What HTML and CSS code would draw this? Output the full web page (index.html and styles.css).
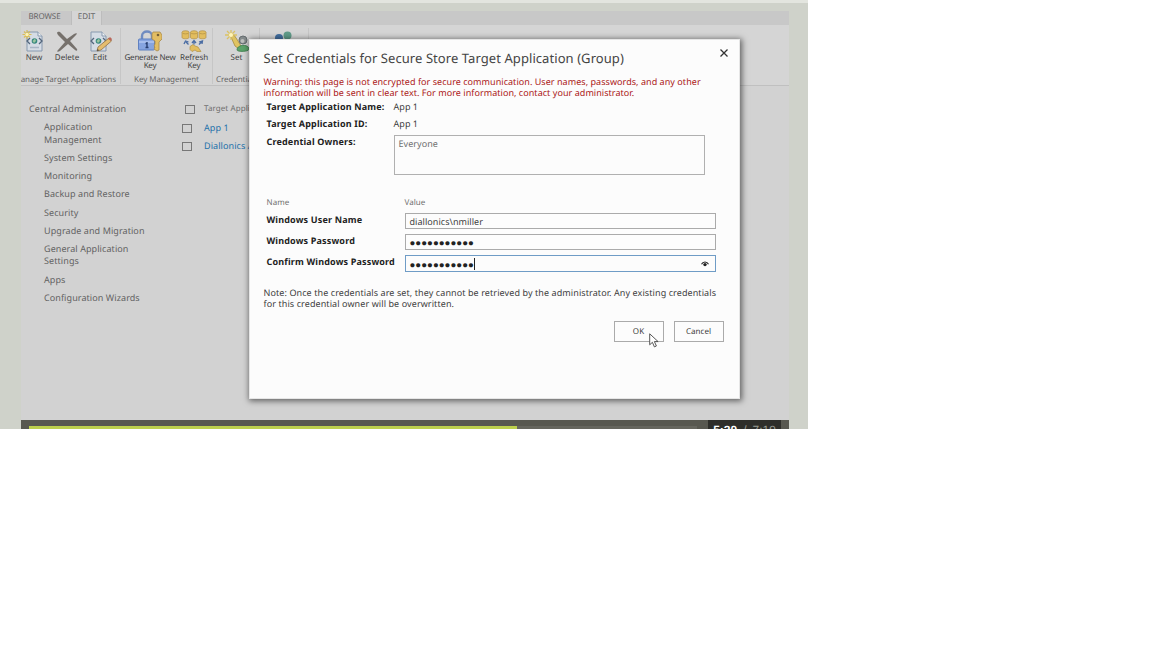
FILE: index.html
```html
<!DOCTYPE html>
<html lang="en">
<head>
<meta charset="utf-8">
<title>Secure Store Target Application</title>
<link rel="stylesheet" href="styles.css">
</head>
<body>
<main class="stage">
  <section class="screen">
    <nav class="tabs"><span class="tab tab-browse">BROWSE</span><span class="tab tab-edit">EDIT</span></nav>
    <div class="ribbon">
      <div class="group group-manage">
        <div class="tools">
          <div class="tool">
            <svg class="icon" viewBox="0 0 24 22"><path d="M5 2h11l4 4v15H5z" fill="#d5dce5" stroke="#8799af"/><path d="M16 2v4h4" fill="#f1f3f5" stroke="#8799af"/><path d="M8 8l-3 3 3 3M17 8l3 3-3 3" fill="none" stroke="#53667d" stroke-width="1.3"/><circle cx="12.5" cy="11" r="2.8" fill="#35877e"/><path d="M10.500 11l2.500-2.500 1 2.500-2 2z" fill="#9bc5a0"/><path d="M8 17.500h9" stroke="#a8b5c5" stroke-width="1.5"/><path d="M5 0v9M.5 4.500h9M2 1.500l6 6M8 1.500l-6 6" stroke="#d8bd5b" stroke-width="1.200"/><circle cx="5" cy="4.500" r="1.700" fill="#fff3b0"/></svg>
            <span>New</span>
          </div>
          <div class="tool">
            <svg class="icon" viewBox="0 0 24 22"><path d="M2 3c1-2 3-1 4 0l6 6 7-5c2-1 4-1 2 1l-6 6 7 8c1 2-1 2-2 1l-7-6-8 7c-2 1-4 1-2-1l7-8-7-7z" fill="#76716c"/></svg>
            <span>Delete</span>
          </div>
          <div class="tool">
            <svg class="icon" viewBox="0 0 24 22"><path d="M3 2h11l4 4v15H3z" fill="#d5dce5" stroke="#8799af"/><path d="M14 2v4h4" fill="#f1f3f5" stroke="#8799af"/><path d="M6 8l-3 3 3 3M15 8l3 3-3 3" fill="none" stroke="#53667d" stroke-width="1.300"/><circle cx="10.500" cy="11" r="2.800" fill="#35877e"/><path d="M8.500 11l2.500-2.500 1 2.500-2 2z" fill="#9bc5a0"/><path d="M9 21l1-4L21 8l2.500 3L13 20z" fill="#e5bd6e" stroke="#8f7146" stroke-width=".8"/><path d="M20 9l2-2 2 2-1 2z" fill="#b9675b"/><path d="M9 21l.6-2 1.500 1.300z" fill="#444"/></svg>
            <span>Edit</span>
          </div>
        </div>
        <div class="group-name">Manage Target Applications</div>
      </div>
      <div class="group group-keys">
        <div class="tools">
          <div class="tool tool-generate">
            <svg class="icon" viewBox="0 0 24 22"><path d="M4 10V6c0-6 10-6 10 0v4" fill="none" stroke="#6f8bc0" stroke-width="2.400"/><rect x=".5" y="9" width="16" height="11" rx="1" fill="#86a4e0" stroke="#5f80c0"/><path d="M1 12h15" stroke="#a6bdec" stroke-width="2"/><path d="M9 12v6M7.500 13.500h2M7.500 17.500h3" stroke="#273e70" stroke-width="1.400"/><path d="M15 2h7l2 3v4l-3 3v8l-2 1-3-2 1-2-1-1 1-2v-3l-3-2V4z" fill="#e2bd63" stroke="#a88a4d" stroke-width=".8"/><circle cx="20" cy="5" r="1.300" fill="#755e35"/></svg>
            <span>Generate New<br>Key</span>
          </div>
          <div class="tool tool-refresh">
            <svg class="icon icon-wide" viewBox="0 0 26 22"><g fill="#e2bd5e" stroke="#b29145" stroke-width=".7"><path d="M1 2.500v5c0 1.700 7 1.700 7 0v-5M9.500 2.500v5c0 1.700 7 1.700 7 0v-5M18 2.500v5c0 1.700 7 1.700 7 0v-5"/><ellipse cx="4.500" cy="2.300" rx="3.500" ry="1.600"/><ellipse cx="13" cy="2.300" rx="3.500" ry="1.600"/><ellipse cx="21.500" cy="2.300" rx="3.500" ry="1.600"/><path d="M9 16.500l3-2 2 1.500 3 1 3 4.500h-4l-2-1.500-3 1.500-2-2z"/></g><path d="M7.500 14.500L5 12m-2 2l1.500-3 3 1M13 14.500v-3m-2 1.500l2-2.500 2 2.500M18 14.500l3-3m-3 .5l3.500-1-.5 3" fill="none" stroke="#4a6ca3" stroke-width="1.300"/></svg>
            <span>Refresh<br>Key</span>
          </div>
        </div>
        <div class="group-name">Key Management</div>
      </div>
      <div class="group group-credentials">
        <div class="tools">
          <div class="tool">
            <svg class="icon" viewBox="0 0 24 22"><path d="M6 7l3-2 4 6 3 5-2 3-4-3z" fill="#e0c461" stroke="#a68b3d" stroke-width=".8"/><path d="M6 0v10M0 5h12M2 1l8 8M10 1L2 9" stroke="#dbc263" stroke-width="1.300"/><circle cx="6" cy="5" r="2" fill="#fff5b9"/><path d="M12 20c0-6 12-6 12-1 0 3-12 3-12 1z" fill="#5ca46a" stroke="#3b7c4b" stroke-width=".8"/><circle cx="18" cy="10" r="4" fill="#858b8c" stroke="#666d70"/><circle cx="17.500" cy="11" r="2" fill="#bec1bf"/></svg>
            <span>Set</span>
          </div>
        </div>
        <div class="group-name">Credentials</div>
      </div>
      <div class="group group-people">
        <svg class="people" viewBox="0 0 24 22"><circle cx="7" cy="7" r="4" fill="#426e9f"/><circle cx="15.500" cy="4.500" r="4" fill="#609c89"/></svg>
      </div>
    </div>
    <div class="content">
      <aside class="sidebar">
        <div class="side-title">Central Administration</div>
        <ul class="side-list">
          <li>Application<br>Management</li><li>System Settings</li><li>Monitoring</li><li>Backup and Restore</li><li>Security</li><li>Upgrade and Migration</li><li>General Application<br>Settings</li><li>Apps</li><li>Configuration Wizards</li>
        </ul>
      </aside>
      <div class="app-list">
        <div class="app-row app-head"><i class="check"></i><span>Target Appli</span></div>
        <div class="app-row"><i class="check"></i><span>App 1</span></div>
        <div class="app-row"><i class="check"></i><span>Diallonics App</span></div>
      </div>
    </div>
    <footer class="player">
      <div class="track"><div class="played"></div></div>
      <div class="time"><b>5:20</b><span>/</span><span>7:19</span></div>
    </footer>
  </section>

  <section class="dialog">
    <header class="dialog-head">
      <h1>Set Credentials for Secure Store Target Application (Group)</h1>
      <svg class="close" viewBox="0 0 8 8"><path d="M.5.500l7 7M7.500.5L.5 7.500" stroke="#333" stroke-width="1.300"/></svg>
    </header>
    <p class="warning">Warning: this page is not encrypted for secure communication. User names, passwords, and any other<br>information will be sent in clear text. For more information, contact your administrator.</p>
    <div class="facts">
      <div class="fact"><b>Target Application Name:</b><span>App 1</span></div>
      <div class="fact"><b>Target Application ID:</b><span>App 1</span></div>
      <div class="fact fact-owners"><b>Credential Owners:</b><div class="owners">Everyone</div></div>
    </div>
    <div class="fields">
      <div class="field field-head"><span>Name</span><span>Value</span></div>
      <div class="field"><b>Windows User Name</b><div class="input">diallonics\nmiller</div></div>
      <div class="field"><b>Windows Password</b><div class="input secret">●●●●●●●●●●●</div></div>
      <div class="field"><b>Confirm Windows Password</b><div class="input secret focused">●●●●●●●●●●●<i class="caret"></i><svg class="eye" viewBox="0 0 8 6"><path d="M.5 3.300C2 .2 6 .2 7.500 3.300" fill="none" stroke="#222" stroke-width="1.200"/><circle cx="4" cy="3.600" r="1.700" fill="#222"/></svg></div></div>
    </div>
    <p class="note">Note: Once the credentials are set, they cannot be retrieved by the administrator. Any existing credentials<br>for this credential owner will be overwritten.</p>
    <div class="actions"><div class="button">OK</div><div class="button">Cancel</div></div>
  </section>
  <svg class="cursor" viewBox="0 0 10 15"><path d="M.7.800v11l2.700-2.500 2 4.600 2-.9-2-4.400h3.700z" fill="#fff" stroke="#444" stroke-width=".9"/></svg>
</main>
</body>
</html>
```
FILE: styles.css
```css
* { box-sizing: border-box; }
body { margin: 0; background: #fff; font-family: "Noto Sans", "Open Sans", sans-serif; text-rendering: geometricPrecision; }
h1, p, ul { margin: 0; padding: 0; font-weight: 400; }
ul { list-style: none; }
svg { display: block; }

.stage { position: relative; width: 808px; height: 429px; overflow: hidden; padding: 8px 19px 0 21px; border-top: 3px solid #e3e5df; background: #cfd2ca; }
.screen { display: flex; flex-direction: column; height: 418px; background: #d2d2d2; overflow: hidden; }

.tabs { display: flex; height: 14px; background: #c8c8c8; font-size: 8px; line-height: 11px; color: #666; }
.tab { text-align: center; white-space: nowrap; }
.tab-browse { width: 50px; padding-right: 3px; letter-spacing: -.1px; }
.tab-edit { width: 31px; background: #d5d5d5; border: 1px solid #bdbdbd; border-width: 0 1px; }

.ribbon { display: flex; height: 61px; background: #d5d5d5; border-bottom: 1px solid #c0c0c0; color: #444; font-size: 8px; line-height: 7.500px; }
.group { display: flex; flex-direction: column; margin: 3px 0 1px; border-right: 1px solid #c6c6c6; }
.group-manage { width: 100px; overflow: hidden; }
.group-keys { width: 92px; }
.group-credentials { width: 47px; }
.group-people { width: 49px; align-items: center; }
.tools { display: flex; height: 47px; padding-top: 2px; }
.tool { display: flex; flex: none; flex-direction: column; align-items: center; gap: 2px; width: 33px; text-align: center; white-space: nowrap; }
.group-manage .tools { margin-left: -3.500px; }
.tool-generate { width: 58px; letter-spacing: -.22px; }
.tool-refresh { width: 30px; letter-spacing: -.1px; }
.group-credentials .tool { width: 47px; }
.icon { width: 24px; height: 22px; }
.icon-wide { width: 26px; }
.people { width: 24px; height: 22px; margin-top: 3px; }
.group-name { height: 10px; line-height: 11px; text-align: center; white-space: nowrap; color: #666; letter-spacing: -.08px; }
.group-manage .group-name { display: flex; justify-content: flex-end; padding-right: 4px; }
.group-credentials .group-name { text-align: left; padding-left: 3px; }

.content { display: flex; height: 334px; color: #626262; font-size: 9px; line-height: 12.200px; letter-spacing: .08px; }
.sidebar { width: 161px; padding: 17px 0 0 8px; white-space: nowrap; }
.side-list { display: flex; flex-direction: column; gap: 6.100px; padding: 6.100px 0 0 15px; }
.app-list { padding-top: 14px; white-space: nowrap; }
.app-row { display: flex; align-items: center; gap: 12px; height: 18px; color: #2171aa; }
.app-head { height: 18px; margin-bottom: 1px; gap: 9px; padding-left: 3px; color: #707070; font-size: 8px; }
.check { width: 10px; height: 9px; border: 1px solid #777; }

.player { display: flex; height: 9px; background: #585850; padding-left: 8px; }
.track { width: 668px; height: 3px; margin: 6px 11px 0 0; background: #66665e; }
.played { width: 488px; height: 3px; background: #bdd04d; }
.time { display: flex; justify-content: center; gap: 6px; width: 73px; height: 9px; padding-top: 3px; background: #2e2e2a; color: #999b93; font: 12px/14px "Liberation Sans", sans-serif; overflow: hidden; }
.time b { color: #fff; font-weight: 700; }

.dialog { position: absolute; left: 249px; top: 36px; width: 491px; height: 360px; padding: 9.500px 15.500px 0 14.500px; background: #fcfcfc; border: 1px solid #e6e6e6; box-shadow: 1px 1px 6px 1px rgba(0, 0, 0, .55); color: #3c3c3c; font-size: 9px; line-height: 11.500px; letter-spacing: .05px; white-space: nowrap; }
.dialog-head { display: flex; justify-content: space-between; margin-left: -1px; height: 26px; margin-right: -4.500px; }
.dialog-head h1 { font-size: 13px; line-height: 16px; letter-spacing: .07px; color: #444; }
.close { width: 8px; height: 8px; margin-top: -.500px; }
.warning { margin-left: -1px; color: #ab1717; }
.facts { padding-left: 2px; }
.fact { display: flex; height: 17.500px; line-height: 16.500px; }
.fact b, .field b { width: 127px; color: #222; letter-spacing: .17px; }
.fact-owners { height: 40px; padding-top: 1px; line-height: 13px; }
.owners { flex: none; width: 311px; height: 40px; padding: 2px 4px; border: 1px solid #b0b0b0; line-height: 12px; color: #707070; }
.fields { padding: 21.500px 0 0 2px; }
.field { display: flex; height: 21px; line-height: 13px; }
.field b, .field-head span:first-child { width: 138px; }
.field-head { height: 18px; font-size: 8px; line-height: 16px; color: #707070; }
.input { display: flex; align-items: center; width: 311px; height: 16px; padding: 1px 6px 0 4px; border: 1px solid #aaa; }
.secret { color: #222; font-size: 9.700px; letter-spacing: 0; }
.focused { border-color: #6f9cc6; height: 17px; }
.caret { width: 1px; height: 12px; background: #222; }
.eye { width: 8px; height: 6px; margin-left: auto; }
.note { margin: 10.500px 0 0 -1px; letter-spacing: .09px; }
.actions { display: flex; justify-content: flex-end; gap: 10px; padding-top: 11.500px; font-size: 8px; }
.button { width: 50px; height: 21px; border: 1px solid #aaa; line-height: 20px; text-align: center; }
.cursor { position: absolute; left: 649px; top: 329.500px; width: 10px; height: 15px; }
```
